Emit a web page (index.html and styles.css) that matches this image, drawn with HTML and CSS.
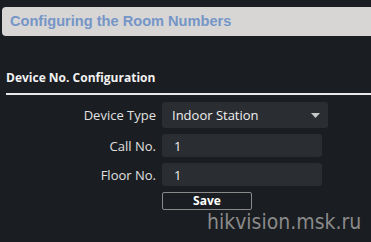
FILE: index.html
```html
<!DOCTYPE html>
<html lang="en">
<head>
  <meta charset="UTF-8"/>
  <title>Configuring the Room Numbers</title>
  <link rel="stylesheet" href="styles.css">
</head>
<body>
  <div class="page-title">Configuring the Room Numbers</div>

  <div class="section">
    <h3>Device No. Configuration</h3>
    <form class="cfg" onsubmit="return false;">
      <label>Device Type</label>
      <div class="select">
        <span>Indoor Station</span>
        <svg class="caret" width="9" height="5" viewBox="0 0 9 5"><path d="M0 0H9L4.5 5Z" fill="#c8c8c8"/></svg>
      </div>

      <label>Call No.</label>
      <div class="field">1</div>

      <label>Floor No.</label>
      <div class="field">1</div>

      <span></span>
      <button>Save</button>
    </form>
  </div>

  <div class="watermark">hikvision.msk.ru</div>
</body>
</html>
```

FILE: styles.css
```css
body { margin:0; background:#1a1d21; font-family:"Open Sans", "Noto Sans", sans-serif;
       color:#e6e6e6; height:242px; overflow:hidden; position:relative }
.page-title { margin:7px 0 0 2px; height:29px; padding-left:8px;
              background:#d7d6d5; border-radius:4px 0 0 4px;
              font:bold 14.6px "Liberation Sans", Arial, sans-serif; line-height:29px; color:#7595c7 }
.section { margin:0 0 0 6px }
.section h3 { margin:0; padding-top:34px; padding-bottom:7px; font-size:12px; font-weight:bold;
              color:#f2f2f2; border-bottom:2px solid #e8e8e8; line-height:16px }
.cfg { display:grid; grid-template-columns:150px auto; column-gap:6px; row-gap:6px;
       margin-top:7px; align-items:center; justify-items:start }
.cfg label { justify-self:end; font-size:13px; color:#e0e0e0 }
.select { width:166px; height:26px; box-sizing:border-box; padding:0 8px 0 10px;
          background:#2a2d32; border-radius:3px; display:flex; align-items:center;
          justify-content:space-between; font-size:13px; color:#f0f0f0 }
.field { width:160px; height:23px; box-sizing:border-box; padding-left:12px;
         background:#2a2d32; border-radius:3px; display:flex; align-items:center;
         font-size:13px; color:#f0f0f0 }
.cfg button { width:90px; height:18px; margin-top:0; padding:0; background:#1a1d21;
              border:1px solid #8a8a8a; border-radius:2px; color:#fff;
              font:bold 12px "Open Sans", "Noto Sans", sans-serif; line-height:14px }
.watermark { position:absolute; left:207px; top:210px;
             font:21px "DejaVu Sans Condensed", "DejaVu Sans", sans-serif; font-stretch:condensed;
             color:#8a8a8a }
```
